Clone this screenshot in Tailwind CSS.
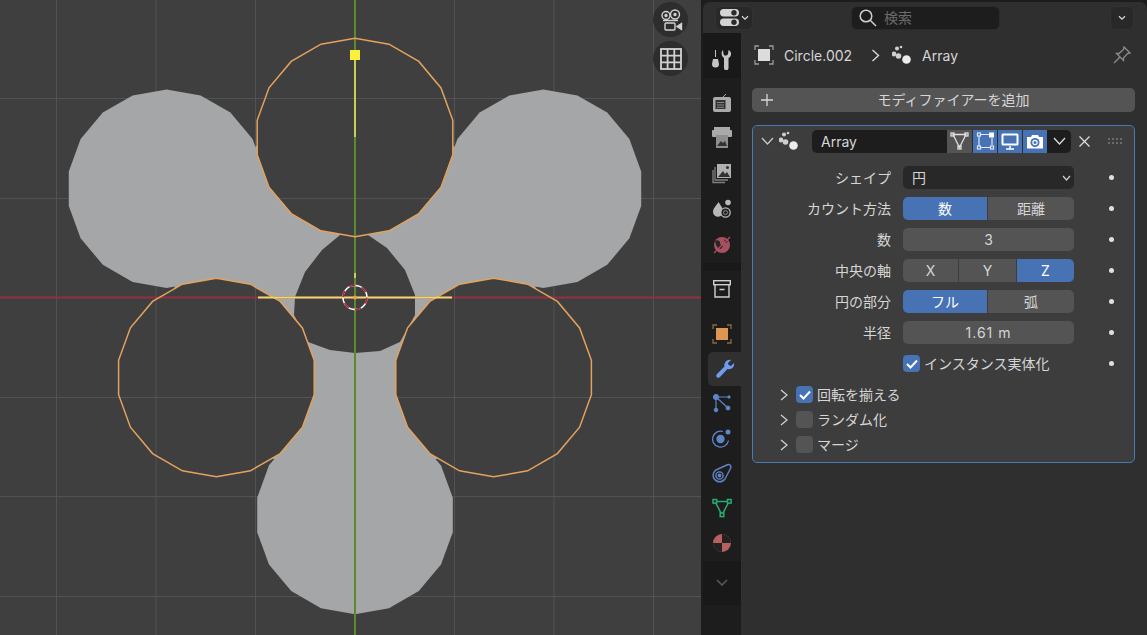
<!DOCTYPE html>
<html lang="en">
<head>
<meta charset="UTF-8">
<title>Array modifier</title>
<script src="https://cdn.jsdelivr.net/npm/@tailwindcss/browser@4"></script>
</head>
<body class="w-[1147px] h-[635px] overflow-hidden bg-[#1d1d1d] font-['Inter','Noto_Sans_CJK_JP',sans-serif] text-[#d6d6d6] text-[14px]">
<div class="flex h-full">

  <!-- 3d viewport -->
  <div class="relative w-[701px] h-full bg-[#3f3f3f] overflow-hidden">
    <svg class="absolute inset-0" width="701" height="635" viewBox="0 0 701 635">
      <defs>
        <mask id="cut" maskUnits="userSpaceOnUse" x="0" y="0" width="701" height="635">
          <rect width="701" height="635" fill="white"/>
          <polygon class="ring" data-cx="355" data-cy="137.5" data-r="99.3" fill="black"/>
          <polygon class="ring" data-cx="216.4" data-cy="377.5" data-r="99.3" fill="black"/>
          <polygon class="ring" data-cx="493.6" data-cy="377.5" data-r="99.3" fill="black"/>
          <polygon fill="black" points="355,235 368,235 387,248 405,270 415,295 415,315 400,342 380,351 355,353 330,350 308,342 294,315 295,297 305,272 322,250 340,235"/>
        </mask>
      </defs>
      <g stroke="#525252" stroke-width="1">
        <path d="M56.500 0V635M156 0V635M255.500 0V635M454.500 0V635M554 0V635M653.500 0V635"/>
        <path d="M0 98.500H701M0 198.500H701M0 397.500H701M0 496.500H701M0 596.500H701"/>
      </g>
      <g mask="url(#cut)" fill="#a5a6a8">
        <polygon class="ring" data-cx="166.6" data-cy="188.7" data-r="99.3"/>
        <polygon class="ring" data-cx="543.4" data-cy="188.7" data-r="99.3"/>
        <polygon class="ring" data-cx="355" data-cy="515" data-r="99.3"/>
        <polygon points="256,146 454,146 535.700,287.500 436.700,459 273.300,459 174.300,287.500"/>
      </g>
      <path d="M0 297.500H701" stroke="#8f3242" stroke-width="2"/>
      <path d="M355 0V635" stroke="#5a8a2e" stroke-width="2"/>
      <g fill="none" stroke="#e3a25e" stroke-width="1.500">
        <polygon class="ring" data-cx="355" data-cy="137.5" data-r="99.3"/>
        <polygon class="ring" data-cx="216.4" data-cy="377.5" data-r="99.3"/>
        <polygon class="ring" data-cx="493.6" data-cy="377.5" data-r="99.3"/>
      </g>
      <path d="M355 55V137M355 273V278" stroke="#c9cf55" stroke-width="2"/>
      <path d="M258 297.500H452" stroke="#ecd874" stroke-width="1.800"/>
      <rect x="350" y="50" width="10" height="10" fill="#fbf03c"/>
      <circle cx="355" cy="297.500" r="12" fill="none" stroke="#fff" stroke-width="1.500"/>
      <circle cx="355" cy="297.500" r="12" fill="none" stroke="#b3252f" stroke-width="1.600" stroke-dasharray="6.300 6.300"/>
      <circle cx="355" cy="297.500" r="2" fill="#eda63a"/>
    </svg>

    <!-- gizmo buttons -->
    <div class="absolute top-[2px] left-[653px] flex flex-col gap-[4px]">
      <div class="w-[35px] h-[35px] rounded-full bg-[#2d2d2d] flex items-center justify-center">
        <svg width="24" height="24" viewBox="0 0 24 24" fill="none" stroke="#d2d2d2" stroke-width="1.400">
          <circle cx="7" cy="7.500" r="4"/><circle cx="16" cy="6.500" r="4.500"/><circle cx="16" cy="6.500" r="1" fill="#d2d2d2"/><circle cx="7" cy="7.500" r="1" fill="#d2d2d2"/>
          <path d="M4 12.500H19"/><rect x="6" y="15" width="10" height="7" rx="1"/><path d="M22.500 15.500V21.500L18 18.500Z" fill="#d2d2d2"/>
        </svg>
      </div>
      <div class="w-[35px] h-[35px] rounded-full bg-[#2d2d2d] flex items-center justify-center">
        <svg width="22" height="22" viewBox="0 0 22 22" fill="none" stroke="#d2d2d2" stroke-width="1.800">
          <rect x="1" y="1" width="20" height="20"/><path d="M7.600 1V21M14.300 1V21M1 7.600H21M1 14.300H21"/>
        </svg>
      </div>
    </div>
  </div>

  <!-- properties editor -->
  <div class="w-[446px] h-full pl-[2px] pt-[2px] bg-[#1d1d1d]">
    <div class="h-full rounded-t-[7px] bg-[#2f2f2f] overflow-hidden flex flex-col">

      <!-- header -->
      <div class="h-[31px] shrink-0 flex items-center pl-[12px] pr-[13px]">
        <div class="w-[38px] h-[24px] rounded-[6px] bg-[#282828] border border-[#333] flex items-center justify-center gap-[1px]">
          <svg width="21" height="19" viewBox="0 0 21 19">
            <rect x="1" y="1" width="19" height="7.500" rx="3.700" fill="#d4d4d4"/><circle cx="15" cy="4.700" r="2.700" fill="#2b2b2b"/>
            <rect x="1" y="10.500" width="19" height="7.500" rx="3.700" fill="#d4d4d4"/><circle cx="15" cy="14.200" r="2.700" fill="#2b2b2b"/>
          </svg>
          <svg width="8" height="6" viewBox="0 0 8 6" fill="none" stroke="#d4d4d4" stroke-width="1.300"><path d="M1 1.200L4 4.200L7 1.200"/></svg>
        </div>
        <div class="ml-[98px] w-[149px] h-[24px] rounded-[6px] bg-[#1d1d1d] border border-[#2a2a2a] flex items-center pl-[6px]">
          <svg width="19" height="19" viewBox="0 0 19 19" fill="none" stroke="#cfcfcf" stroke-width="1.500"><circle cx="8" cy="8" r="5.800"/><path d="M12.200 12.200L18 18"/></svg>
          <span class="ml-[7px] text-[#6b6b6b]">検索</span>
        </div>
        <div class="ml-auto w-[24px] h-[24px] rounded-[6px] bg-[#282828] border border-[#333] flex items-center justify-center">
          <svg width="8" height="6" viewBox="0 0 8 6" fill="none" stroke="#d4d4d4" stroke-width="1.300"><path d="M1 1.200L4 4.200L7 1.200"/></svg>
        </div>
      </div>

      <div class="flex flex-1 min-h-0">
        <!-- tab column -->
        <div class="w-[38px] shrink-0 bg-[#1d1d1d] flex flex-col items-end">
          <div class="w-[38px] h-[45px] pt-[9px] bg-[#191919] flex items-center justify-center">
            <svg width="22" height="20" viewBox="0 0 22 20" fill="#c5c5c5">
              <path d="M4 0H5V7H4Z"/><path d="M2 9H7L8 14A3.500 3.500 0 0 1 1 14Z"/>
              <path d="M12 0L12.500 4C13 6 16 6 17 4L17.500 0C21 2 21 6 17.500 8V18A2 2 0 0 1 13 18V8C10 6 10 2 12 0Z"/>
            </svg>
          </div>
          <div class="w-[38px] pt-[7px]">
            <div class="h-[35.5px] flex items-center justify-center">
              <svg width="20" height="22" viewBox="0 0 20 22"><path d="M14 2L11 5" stroke="#aaa" fill="none"/><rect x="1" y="5" width="18" height="15" rx="2" fill="#aaa"/><rect x="3.500" y="8" width="10" height="9" fill="#333"/><path d="M5 10.500H12M5 13H12M5 15.300H12" stroke="#888"/></svg>
            </div>
            <div class="h-[35.5px] flex items-center justify-center">
              <svg width="20" height="22" viewBox="0 0 20 22"><rect x="2" y="0" width="16" height="3" fill="#aaa"/><rect x="0" y="3" width="20" height="7" rx="1" fill="#aaa"/><rect x="4" y="8" width="12" height="13" fill="#8e8e8e"/><path d="M5 19L9 14L11 16L13 14L15 19Z" fill="#333"/></svg>
            </div>
            <div class="h-[35.5px] flex items-center justify-center">
              <svg width="20" height="22" viewBox="0 0 20 22" fill="none"><rect x="5" y="1" width="14" height="14" fill="#b0b0b0"/><path d="M6 14L11 8L13 11L15 9L18 14Z" fill="#333"/><circle cx="15.500" cy="4.500" r="1.500" fill="#333"/><path d="M3 4V17H16M1 7V19.500H13" stroke="#808080" stroke-width="1.300"/></svg>
            </div>
            <div class="h-[35.5px] flex items-center justify-center">
              <svg width="20" height="20" viewBox="0 0 20 20"><path d="M6.500 3C9 7 11 9 11 12.500A5 5 0 0 1 1 13C1 9.500 4 7 6.500 3Z" fill="#b8b8b8"/><circle cx="16" cy="3.500" r="2.800" fill="#b8b8b8"/><circle cx="13.500" cy="13.500" r="4.700" fill="#222" stroke="#b8b8b8" stroke-width="1.300"/><circle cx="13.500" cy="13.500" r="2" fill="none" stroke="#888"/></svg>
            </div>
            <div class="h-[35.5px] flex items-center justify-center">
              <svg width="20" height="20" viewBox="0 0 20 20"><circle cx="10" cy="10" r="8" fill="#a65160"/><path d="M3 6C6 4 9 7 8 9L11 11L9 14L6 13L4 10ZM12 4L16 7L13 8Z" fill="#262626"/><path d="M2 18L18 2" stroke="#a65160" stroke-width="1.300"/></svg>
            </div>
          </div>
          <div class="w-[38px] h-[8px] bg-[#191919]"></div>
          <div class="w-[38px] h-[36px] flex items-center justify-center">
            <svg width="18" height="18" viewBox="0 0 18 18" fill="none" stroke="#d0d0d0" stroke-width="1.400"><rect x="0.700" y="0.700" width="16.600" height="4"/><path d="M2 4.700V17H16V4.700M6.500 9.500H11.500"/></svg>
          </div>
          <div class="w-[38px] h-[36px] mt-[9px] flex items-center justify-center">
            <svg width="20" height="20" viewBox="0 0 20 20" fill="none" stroke="#8a6a45" stroke-width="1.300"><path d="M1 5V1H5M15 1H19V5M19 15V19H15M5 19H1V15"/><rect x="4" y="4" width="12" height="12" fill="#de9650" stroke="none"/></svg>
          </div>
          <div class="w-[33px] h-[34px] rounded-l-[5px] bg-[#303030] flex items-center justify-center">
            <svg width="20" height="20" viewBox="0 0 20 20" fill="#6f9cf0"><path d="M19 4C20 8 16 11 12.500 10L5 18C2.500 20 0 17.500 2 15L9.500 7.500C8.500 4 12 0 16 1L12.800 4.200L14 6.200L16 7Z"/></svg>
          </div>
          <div class="w-[38px]">
            <div class="h-[35px] flex items-center justify-center">
              <svg width="20" height="20" viewBox="0 0 20 20" fill="#5f85c8" stroke="#5f85c8"><circle cx="4" cy="4" r="2.600"/><circle cx="4" cy="17" r="1.800"/><circle cx="16" cy="15" r="2"/><circle cx="17" cy="4" r="1.200"/><path d="M4 4H17M4 4V17M4 4L16 15" fill="none" stroke-width="1.200"/></svg>
            </div>
            <div class="h-[35px] flex items-center justify-center">
              <svg width="20" height="20" viewBox="0 0 20 20" fill="none" stroke="#5f85c8" stroke-width="1.300"><circle cx="8.500" cy="11" r="3.500" fill="#5f85c8"/><circle cx="16" cy="4" r="2.500" fill="#5f85c8" stroke="none"/><path d="M11 3.500A8 8 0 1 0 16.500 12.500"/></svg>
            </div>
            <div class="h-[35px] flex items-center justify-center">
              <svg width="20" height="20" viewBox="0 0 20 20" fill="none" stroke="#5f85c8" stroke-width="1.400"><path d="M16 1.500C18.500 1 19.500 3.500 18.500 5.500L13 16A6.500 6.500 0 1 1 6 6Z"/><circle cx="7.500" cy="12.500" r="3.600"/><circle cx="7.500" cy="12.500" r="1.200" fill="#5f85c8"/></svg>
            </div>
            <div class="h-[35px] flex items-center justify-center">
              <svg width="20" height="20" viewBox="0 0 20 20" fill="none" stroke="#27ad73" stroke-width="1.500"><path d="M3 3.500H17L10 17Z"/><rect x="1" y="1.500" width="3.600" height="3.600" fill="#1d1d1d"/><rect x="15.500" y="1.500" width="3.600" height="3.600" fill="#1d1d1d"/><rect x="8.200" y="15" width="3.600" height="3.600" fill="#1d1d1d"/></svg>
            </div>
            <div class="h-[35px] flex items-center justify-center">
              <svg width="20" height="20" viewBox="0 0 20 20"><circle cx="10" cy="10" r="9" fill="#b8605f"/><path d="M10 1A9 9 0 0 1 19 10H10ZM10 10V19A9 9 0 0 1 1 10Z" fill="#222"/></svg>
            </div>
          </div>
          <div class="w-[38px] h-[44px] bg-[#191919] flex items-center justify-center">
            <svg width="12" height="7" viewBox="0 0 12 7" fill="none" stroke="#5a5a5a" stroke-width="1.500"><path d="M1 1L6 6L11 1"/></svg>
          </div>
        </div>

        <!-- panel content -->
        <div class="flex-1 pl-[11px] pr-[12px]">
          <div class="h-[44px] flex items-center pl-[2px]">
            <svg width="20" height="20" viewBox="0 0 20 20" fill="none" stroke="#999" stroke-width="1.300"><path d="M1 5V1H5M15 1H19V5M19 15V19H15M5 19H1V15"/><rect x="4" y="4" width="12" height="12" fill="#dcdcdc" stroke="none"/></svg>
            <span class="ml-[10px]">Circle.002</span>
            <svg class="ml-[19px]" width="9" height="13" viewBox="0 0 9 13" fill="none" stroke="#d8d8d8" stroke-width="1.400"><path d="M1.500 1L7.500 6.500L1.500 12"/></svg>
            <svg class="ml-[12px]" width="20" height="20" viewBox="0 0 20 20" fill="#cfcfcf"><circle cx="5" cy="3.500" r="2"/><circle cx="2" cy="9" r="2.400"/><circle cx="6.500" cy="11" r="2.800"/><circle cx="14.500" cy="14.500" r="4.300" fill="#ececec"/><circle cx="9" cy="2" r="1.300"/></svg>
            <span class="ml-[10px]">Array</span>
            <svg class="ml-auto mr-[4px]" width="18" height="18" viewBox="0 0 18 18" fill="none" stroke="#8d8d8d" stroke-width="1.300"><path d="M11 1L17 7L14.500 7.500L10.500 12L10.500 14.500L3.500 7.500L6 7.500L10.500 3.500Z"/><path d="M7 11L1 17"/></svg>
          </div>
          <div class="h-[24px] mt-[11px] rounded-[5px] bg-[#545454] flex items-center relative justify-center">
            <svg class="absolute left-[9px]" width="12" height="12" viewBox="0 0 12 12" stroke="#d8d8d8" stroke-width="1.300"><path d="M6 0V12M0 6H12"/></svg>
            <span class="ml-[20px] -mt-[1px]">モディファイアーを追加</span>
          </div>

          <!-- modifier panel -->
          <div class="mt-[13px] h-[338px] rounded-[5px] border border-[#4b78b8] bg-[#3d3d3d] px-[8px]">
            <div class="h-[30px] flex items-center">
              <svg width="13" height="8" viewBox="0 0 13 8" fill="none" stroke="#c8c8c8" stroke-width="1.300"><path d="M1 1L6.500 7L12 1"/></svg>
              <svg class="ml-[5px]" width="20" height="20" viewBox="0 0 20 20" fill="#cfcfcf"><circle cx="5" cy="3.500" r="2"/><circle cx="2" cy="9" r="2.400"/><circle cx="6.500" cy="11" r="2.800"/><circle cx="14.500" cy="14.500" r="4.300" fill="#ececec"/><circle cx="9" cy="2" r="1.300"/></svg>
              <div class="ml-[13px] w-[135px] h-[23px] rounded-l-[5px] bg-[#1d1d1d] flex items-center pl-[9px]">Array</div>
              <div class="w-[25px] h-[23px] bg-[#545454] flex items-center justify-center">
                <svg width="19" height="18" viewBox="0 0 19 18" fill="none" stroke="#e0e0e0" stroke-width="1.300"><path d="M3 2.500H16L9.500 15.500Z"/><rect x="1" y="1" width="3" height="3"/><rect x="15" y="1" width="3" height="3"/><rect x="8" y="14" width="3" height="3"/></svg>
              </div>
              <div class="w-[25px] h-[23px] bg-[#4772b3] flex items-center justify-center border-l border-[#2d2d2d]">
                <svg width="19" height="18" viewBox="0 0 19 18" fill="none" stroke="#dfe8f6" stroke-width="1.200"><path d="M3 4V14M5 15.500H14M16 13V6M4 2.500H13"/><rect x="1.500" y="1" width="3" height="3"/><rect x="13" y="0.500" width="5" height="5" fill="#fff" stroke="none"/><rect x="1.500" y="14" width="3" height="3"/><rect x="14.500" y="14" width="3" height="3"/></svg>
              </div>
              <div class="w-[25px] h-[23px] bg-[#4772b3] flex items-center justify-center border-l border-[#2d2d2d]">
                <svg width="18" height="17" viewBox="0 0 18 17"><rect x="0.500" y="0.500" width="17" height="12" rx="1.500" fill="#fff"/><rect x="2.500" y="2.500" width="13" height="8" fill="#4772b3"/><path d="M9 13V15.500M5 16H13" stroke="#fff" stroke-width="1.500"/></svg>
              </div>
              <div class="w-[25px] h-[23px] bg-[#4772b3] flex items-center justify-center border-l border-[#2d2d2d]">
                <svg width="18" height="15" viewBox="0 0 18 15"><path d="M1 3H5L6 1H12L13 3H17V14.500H1Z" fill="#fff"/><circle cx="9" cy="8.500" r="4.500" fill="#4772b3"/><circle cx="9" cy="8.500" r="2.700" fill="#fff"/><circle cx="9" cy="8.500" r="1.500" fill="#4772b3"/></svg>
              </div>
              <div class="w-[24px] h-[23px] rounded-r-[5px] bg-[#1d1d1d] flex items-center justify-center">
                <svg width="13" height="8" viewBox="0 0 13 8" fill="none" stroke="#dcdcdc" stroke-width="1.300"><path d="M1 1L6.500 7L12 1"/></svg>
              </div>
              <svg class="ml-[8px]" width="11" height="11" viewBox="0 0 11 11" stroke="#dcdcdc" stroke-width="1.300"><path d="M0.500 0.500L10.500 10.500M10.500 0.500L0.500 10.500"/></svg>
              <svg class="ml-[18px]" width="15" height="7" viewBox="0 0 15 7" fill="#6a6a6a"><path d="M0 0h2v2H0zM4 0h2v2H4zM8 0h2v2H8zM12 0h2v2h-2zM0 4h2v2H0zM4 4h2v2H4zM8 4h2v2H8zM12 4h2v2h-2z"/></svg>
            </div>

            <!-- property rows -->
            <div class="mt-[10px] flex flex-col gap-[8px]">
              <div class="flex items-center h-[23px]">
                <div class="w-[130px] text-right">シェイプ</div>
                <div class="ml-[12px] w-[171px] h-[23px] rounded-[5px] bg-[#282828] flex items-center justify-between pl-[9px] pr-[3px]">
                  <span>円</span>
                  <svg width="9" height="6" viewBox="0 0 9 6" fill="none" stroke="#cfcfcf" stroke-width="1.200"><path d="M1 1L4.500 5L8 1"/></svg>
                </div>
                <div class="ml-[35px] w-[5px] h-[5px] rounded-full bg-[#e0e0e0]"></div>
              </div>
              <div class="flex items-center h-[23px]">
                <div class="w-[130px] text-right">カウント方法</div>
                <div class="ml-[12px] w-[171px] h-[23px] rounded-[5px] overflow-hidden flex">
                  <div class="w-[84px] bg-[#4772b3] flex items-center justify-center text-white">数</div>
                  <div class="flex-1 bg-[#545454] border-l border-[#3d3d3d] flex items-center justify-center">距離</div>
                </div>
                <div class="ml-[35px] w-[5px] h-[5px] rounded-full bg-[#e0e0e0]"></div>
              </div>
              <div class="flex items-center h-[23px]">
                <div class="w-[130px] text-right">数</div>
                <div class="ml-[12px] w-[171px] h-[23px] rounded-[5px] bg-[#545454] flex items-center justify-center">3</div>
                <div class="ml-[35px] w-[5px] h-[5px] rounded-full bg-[#e0e0e0]"></div>
              </div>
              <div class="flex items-center h-[23px]">
                <div class="w-[130px] text-right">中央の軸</div>
                <div class="ml-[12px] w-[171px] h-[23px] rounded-[5px] overflow-hidden flex">
                  <div class="w-[55px] bg-[#545454] flex items-center justify-center">X</div>
                  <div class="w-[58px] bg-[#545454] border-l border-[#3d3d3d] flex items-center justify-center">Y</div>
                  <div class="flex-1 bg-[#4772b3] border-l border-[#3d3d3d] flex items-center justify-center text-white">Z</div>
                </div>
                <div class="ml-[35px] w-[5px] h-[5px] rounded-full bg-[#e0e0e0]"></div>
              </div>
              <div class="flex items-center h-[23px]">
                <div class="w-[130px] text-right">円の部分</div>
                <div class="ml-[12px] w-[171px] h-[23px] rounded-[5px] overflow-hidden flex">
                  <div class="w-[84px] bg-[#4772b3] flex items-center justify-center text-white">フル</div>
                  <div class="flex-1 bg-[#545454] border-l border-[#3d3d3d] flex items-center justify-center">弧</div>
                </div>
                <div class="ml-[35px] w-[5px] h-[5px] rounded-full bg-[#e0e0e0]"></div>
              </div>
              <div class="flex items-center h-[23px]">
                <div class="w-[130px] text-right">半径</div>
                <div class="ml-[12px] w-[171px] h-[23px] rounded-[5px] bg-[#545454] flex items-center justify-center tracking-[1px]">1.61 m</div>
                <div class="ml-[35px] w-[5px] h-[5px] rounded-full bg-[#e0e0e0]"></div>
              </div>
              <div class="flex items-center h-[23px]">
                <div class="ml-[142px] w-[17px] h-[17px] rounded-[4px] bg-[#4772b3] flex items-center justify-center">
                  <svg width="12" height="10" viewBox="0 0 12 10" fill="none" stroke="#fff" stroke-width="2"><path d="M1 5L4.500 8.500L11 1.500"/></svg>
                </div>
                <span class="ml-[4px] w-[150px]">インスタンス実体化</span>
                <div class="ml-[35px] w-[5px] h-[5px] rounded-full bg-[#e0e0e0]"></div>
              </div>
            </div>

            <!-- sub panels -->
            <div class="mt-[11px] pl-[19px] flex flex-col gap-[8px]">
              <div class="flex items-center h-[17px]">
                <svg width="8" height="12" viewBox="0 0 8 12" fill="none" stroke="#d0d0d0" stroke-width="1.300"><path d="M1 1L7 6L1 11"/></svg>
                <div class="ml-[8px] w-[17px] h-[17px] rounded-[4px] bg-[#4772b3] flex items-center justify-center">
                  <svg width="12" height="10" viewBox="0 0 12 10" fill="none" stroke="#fff" stroke-width="2"><path d="M1 5L4.500 8.500L11 1.500"/></svg>
                </div>
                <span class="ml-[4px]">回転を揃える</span>
              </div>
              <div class="flex items-center h-[17px]">
                <svg width="8" height="12" viewBox="0 0 8 12" fill="none" stroke="#d0d0d0" stroke-width="1.300"><path d="M1 1L7 6L1 11"/></svg>
                <div class="ml-[8px] w-[17px] h-[17px] rounded-[4px] bg-[#545454]"></div>
                <span class="ml-[4px]">ランダム化</span>
              </div>
              <div class="flex items-center h-[17px]">
                <svg width="8" height="12" viewBox="0 0 8 12" fill="none" stroke="#d0d0d0" stroke-width="1.300"><path d="M1 1L7 6L1 11"/></svg>
                <div class="ml-[8px] w-[17px] h-[17px] rounded-[4px] bg-[#545454]"></div>
                <span class="ml-[4px]">マージ</span>
              </div>
            </div>
          </div>
        </div>
      </div>
    </div>
  </div>
</div>

<script>
  // low-poly circles, same vertex count as the mesh
  const SIDES = 18;
  document.querySelectorAll('polygon.ring').forEach(ring => {
    const cx = +ring.dataset.cx, cy = +ring.dataset.cy, r = +ring.dataset.r;
    const pts = [];
    for (let i = 0; i < SIDES; i++) {
      const a = i / SIDES * Math.PI * 2;
      pts.push((cx + Math.sin(a) * r).toFixed(1) + ',' + (cy + Math.cos(a) * r).toFixed(1));
    }
    ring.setAttribute('points', pts.join(' '));
  });
</script>
</body>
</html>
